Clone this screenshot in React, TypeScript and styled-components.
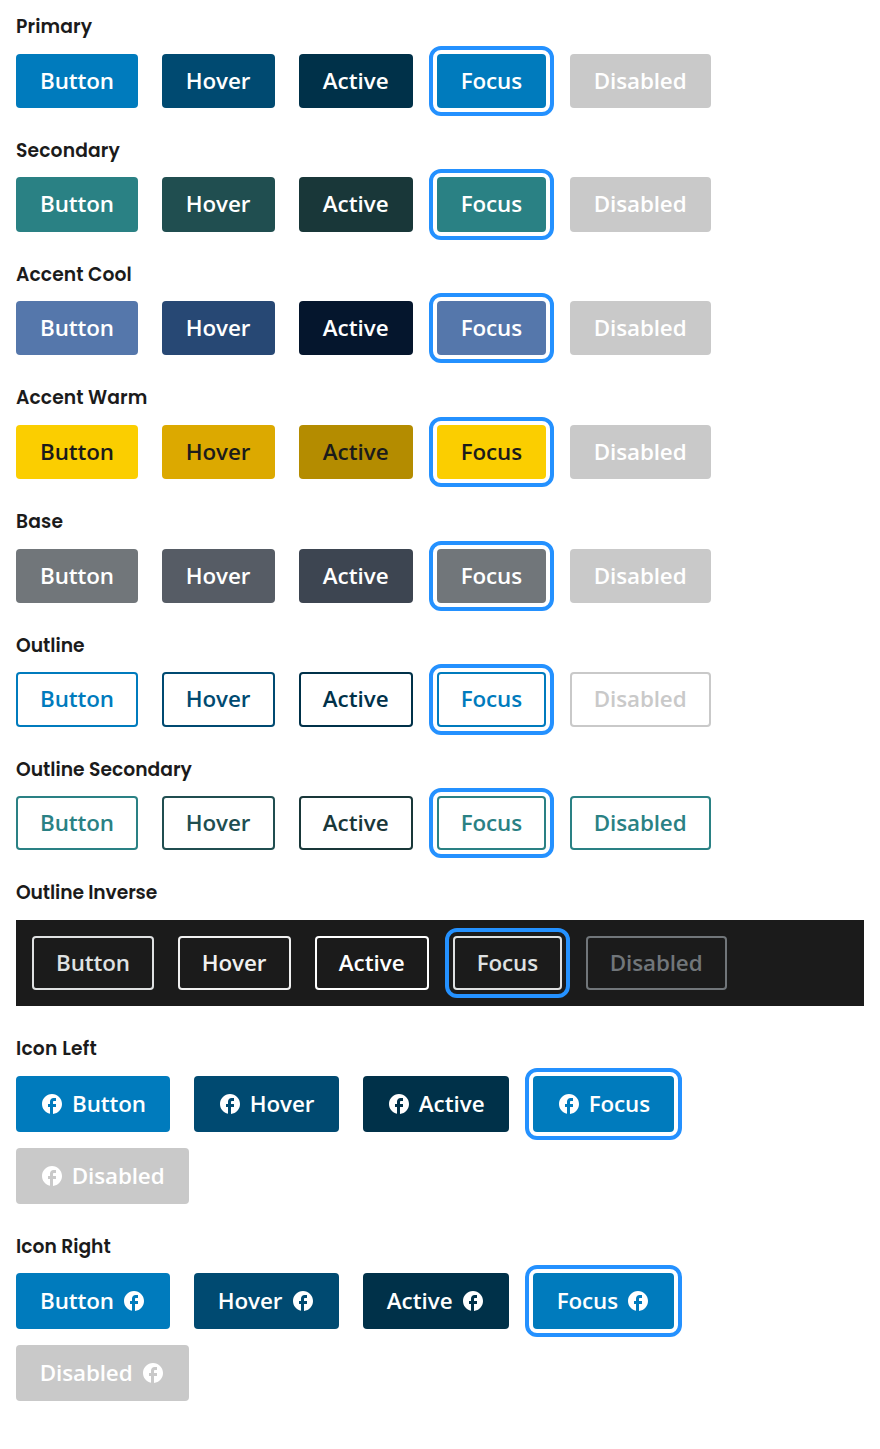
import React from "react";
import styled, { createGlobalStyle, css } from "styled-components";

const GlobalStyle = createGlobalStyle`
  *, *::before, *::after { box-sizing: border-box; }
  body {
    margin: 0;
    background: #fff;
    color: #1b1b1b;
    font-family: "Open Sans", "Noto Sans", sans-serif;
  }
`;

const Page = styled.main`
  padding: 13.125px 16px 0;
  min-height: 1449px;
`;

const Section = styled.section`
  margin-bottom: 29.016px;
`;

const Heading = styled.h2<{ $tracking: number }>`
  margin: 0 0 13.438px;
  height: 27px;
  line-height: 27px;
  font-family: Poppins, Inter, sans-serif;
  font-size: 18.72px;
  font-weight: 600;
  letter-spacing: ${(p) => p.$tracking}px;
  white-space: nowrap;
`;

const Row = styled.div<{ $inverse?: boolean }>`
  display: flex;
  flex-wrap: wrap;
  gap: 16px 24px;
  ${(p) =>
    p.$inverse &&
    css`
      padding: 16px;
      background: #1b1b1b;
    `}
`;

const Button = styled.button<{
  $bg: string;
  $fg: string;
  $line?: string;
  $focused: boolean;
}>`
  display: inline-flex;
  align-items: center;
  gap: 8px;
  margin: 0;
  padding: 16px 24px;
  border: 0;
  border-radius: 4px;
  background: ${(p) => p.$bg};
  color: ${(p) => p.$fg};
  box-shadow: ${(p) => (p.$line ? `inset 0 0 0 2px ${p.$line}` : "none")};
  font-family: "Open Sans", "Noto Sans", sans-serif;
  font-size: 22.4px;
  font-weight: 600;
  line-height: 22.3px;
  text-align: left;
  white-space: nowrap;
  ${(p) =>
    p.$focused &&
    css`
      outline: 4px solid #2491ff;
      outline-offset: 4px;
    `}
`;

const Label = styled.span<{
  $width: number;
  $tracking: number;
  $indent: number;
  $besideIcon: boolean;
}>`
  width: ${(p) => p.$width}px;
  margin-top: ${(p) => (p.$besideIcon ? "0.6px" : "0")};
  text-indent: ${(p) => p.$indent}px;
  letter-spacing: ${(p) => p.$tracking}px;
`;

const Icon = styled.svg`
  display: block;
  width: 24px;
  height: 24px;
  fill: currentColor;
`;

const FacebookIcon = () => (
  <Icon viewBox="0 0 24 24" aria-hidden="true">
    <path d="M22 12c0-5.52-4.48-10-10-10S2 6.48 2 12c0 4.84 3.44 8.87 8 9.8V15H8v-3h2V9.5C10 7.57 11.57 6 13.5 6H16v3h-2c-.55 0-1 .45-1 1v2h3v3h-3v6.95c5.05-.5 9-4.76 9-9.95z" />
  </Icon>
);

const states = [
  { label: "Button", width: 74, tracking: -0.1, indent: 0 },
  { label: "Hover", width: 65, tracking: -0.08, indent: -0.25 },
  { label: "Active", width: 66, tracking: 0, indent: -0.25 },
  { label: "Focus", width: 61, tracking: -0.12, indent: -0.25 },
  { label: "Disabled", width: 93, tracking: -0.1, indent: -0.25 },
];

type Group = {
  title: string;
  tracking: number;
  bg?: string[];
  fg: string[];
  outlined?: boolean;
  inverse?: boolean;
  icon?: "left" | "right";
};

const white = Array(5).fill("#fff");
const ink = "#1b1b1b";
const gray = "#c9c9c9";
const primary = ["#007bbd", "#004a71", "#003149", "#007bbd", gray];

const groups: Group[] = [
  { title: "Primary", tracking: 0.14, bg: primary, fg: white },
  { title: "Secondary", tracking: 0.14, bg: ["#2a8184", "#204e50", "#193739", "#2a8184", gray], fg: white },
  { title: "Accent Cool", tracking: 0.08, bg: ["#5577ab", "#274874", "#05162d", "#5577ab", gray], fg: white },
  { title: "Accent Warm", tracking: 0.08, bg: ["#fbce00", "#dca900", "#b48c00", "#fbce00", gray], fg: [ink, ink, ink, ink, "#fff"] },
  { title: "Base", tracking: 0.2, bg: ["#71767a", "#565c65", "#3d4551", "#71767a", gray], fg: white },
  { title: "Outline", tracking: 0, fg: primary, outlined: true },
  { title: "Outline Secondary", tracking: 0, fg: ["#2a8184", "#204e50", "#193739", "#2a8184", "#2a8184"], outlined: true },
  { title: "Outline Inverse", tracking: -0.1, fg: ["#dfe1e2", "#f0f0f0", "#fff", "#dfe1e2", "#71767a"], outlined: true, inverse: true },
  { title: "Icon Left", tracking: 0.2, bg: primary, fg: white, icon: "left" },
  { title: "Icon Right", tracking: 0, bg: primary, fg: white, icon: "right" },
];

export default function App() {
  return (
    <>
      <GlobalStyle />
      <Page>
        {groups.map((g) => (
          <Section key={g.title}>
            <Heading $tracking={g.tracking}>{g.title}</Heading>
            <Row $inverse={g.inverse}>
              {states.map(({ label, width, tracking, indent }, i) => (
                <Button
                  key={label}
                  type="button"
                  disabled={label === "Disabled"}
                  $bg={g.bg ? g.bg[i] : "transparent"}
                  $fg={g.fg[i]}
                  $line={g.outlined ? g.fg[i] : undefined}
                  $focused={label === "Focus"}
                >
                  {g.icon === "left" && <FacebookIcon />}
                  <Label
                    $width={width}
                    $tracking={tracking}
                    $indent={indent}
                    $besideIcon={Boolean(g.icon)}
                  >
                    {label}
                  </Label>
                  {g.icon === "right" && <FacebookIcon />}
                </Button>
              ))}
            </Row>
          </Section>
        ))}
      </Page>
    </>
  );
}
